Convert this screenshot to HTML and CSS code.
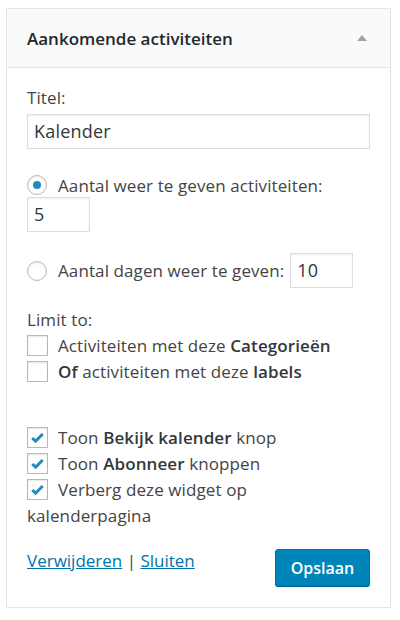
FILE: index.html
```html
<!DOCTYPE html>
<html lang="nl">
<head>
<meta charset="utf-8">
<title>Widget</title>
<link rel="stylesheet" href="styles.css">
</head>
<body>
<div class="widget">
  <div class="head">
    <h3 class="title">Aankomende activiteiten</h3>
    <span class="arrow"></span>
  </div>
  <div class="body">
    <div class="label">Titel:</div>
    <div class="input wide">Kalender</div>

    <div class="radio-row first">
      <span class="radio on"></span>
      <span>Aantal weer te geven activiteiten:</span>
    </div>
    <div class="input small">5</div>

    <div class="radio-row second">
      <span class="radio"></span>
      <span>Aantal dagen weer te geven:</span>
      <span class="input small">10</span>
    </div>

    <div class="label limit">Limit to:</div>
    <p class="check"><span class="box"></span>Activiteiten met deze <b>Categorieën</b></p>
    <p class="check"><span class="box"></span><b>Of</b> activiteiten met deze <b>labels</b></p>

    <p class="check gap"><span class="box checked"><svg viewBox="0 0 20 20"><path d="M4.5 10.5l3.5 3.4L15.5 6.3"/></svg></span>Toon <b>Bekijk kalender</b> knop</p>
    <p class="check"><span class="box checked"><svg viewBox="0 0 20 20"><path d="M4.5 10.5l3.5 3.4L15.5 6.3"/></svg></span>Toon <b>Abonneer</b> knoppen</p>
    <p class="check"><span class="box checked"><svg viewBox="0 0 20 20"><path d="M4.5 10.5l3.5 3.4L15.5 6.3"/></svg></span>Verberg deze widget op kalenderpagina</p>

    <div class="footer">
      <div class="links"><a href="#">Verwijderen</a> | <a href="#">Sluiten</a></div>
      <button class="save" type="button">Opslaan</button>
    </div>
  </div>
</div>
</body>
</html>
```
FILE: styles.css
```css
* { box-sizing: border-box; }
body {
  margin: 0;
  padding: 8px 9px 0 6px;
  background: #fff;
  font-family: "Open Sans", "Noto Sans", sans-serif;
  font-size: 17px;
  letter-spacing: 0.1px;
  color: #444;
}
.widget {
  width: 385px;
  border: 1px solid #e5e5e5;
  box-shadow: 0 1px 1px rgba(0,0,0,0.04);
  background: #fff;
}
.head {
  height: 59px;
  display: flex;
  align-items: center;
  justify-content: space-between;
  padding: 0 23px 0 20px;
  background: #fafafa;
  border-bottom: 1px solid #e5e5e5;
}
.title {
  margin: 0;
  font-size: 17px;
  letter-spacing: 0;
  font-weight: 600;
  color: #23282d;
}
.arrow {
  width: 0;
  height: 0;
  border-left: 5px solid transparent;
  border-right: 5px solid transparent;
  border-bottom: 6px solid #a0a5aa;
}
.body {
  padding: 17px 20px 21px 20px;
}
.label {
  line-height: 26px;
}
.input {
  height: 35px;
  border: 1px solid #ddd;
  box-shadow: inset 0 1px 2px rgba(0,0,0,0.07);
  background: #fff;
  color: #32373c;
  font-size: 18px;
  letter-spacing: 0.2px;
  line-height: 33px;
  padding: 0 6px;
}
.input.wide { margin-top: 3px; }
.input.small { width: 63px; }
.radio-row {
  display: flex;
  align-items: center;
  gap: 11px;
}
.radio-row.first { margin-top: 24px; height: 24px; }
.radio-row.second { margin-top: 21px; height: 35px; }
.radio-row.second .input { margin-left: -5px; }
.radio {
  width: 20px;
  height: 20px;
  border-radius: 50%;
  border: 1px solid #b4b9be;
  box-shadow: inset 0 1px 2px rgba(0,0,0,0.1);
  background: #fff;
  display: flex;
  align-items: center;
  justify-content: center;
  flex: none;
}
.radio.on::after {
  content: "";
  width: 8px;
  height: 8px;
  border-radius: 50%;
  background: #1e8cbe;
}
.limit { margin-top: 19px; }
.check {
  margin: 0;
  line-height: 26px;
}
.check b { font-weight: 600; color: #32373c; }
.check.gap { margin-top: 40px; }
.box {
  display: inline-block;
  width: 21px;
  height: 21px;
  border: 1px solid #b4b9be;
  box-shadow: inset 0 1px 2px rgba(0,0,0,0.1);
  background: #fff;
  vertical-align: -4px;
  margin-right: 10px;
}
.box svg {
  width: 19px;
  height: 19px;
  display: block;
}
.box svg path {
  fill: none;
  stroke: #1e8cbe;
  stroke-width: 3.2;
}
.footer {
  margin-top: 20px;
  display: flex;
  justify-content: space-between;
  align-items: flex-start;
}
.links {
  line-height: 24px;
  color: #444;
  letter-spacing: 0;
}
.links a { color: #0073aa; }
.save {
  width: 95px;
  height: 37px;
  border: 1px solid #0073aa;
  border-radius: 3px;
  background: #0085ba;
  box-shadow: 0 1px 0 #006799;
  color: #fff;
  font-family: "Open Sans", "Noto Sans", sans-serif;
  font-size: 16px;
  font-weight: 600;
  padding: 0;
}
```
